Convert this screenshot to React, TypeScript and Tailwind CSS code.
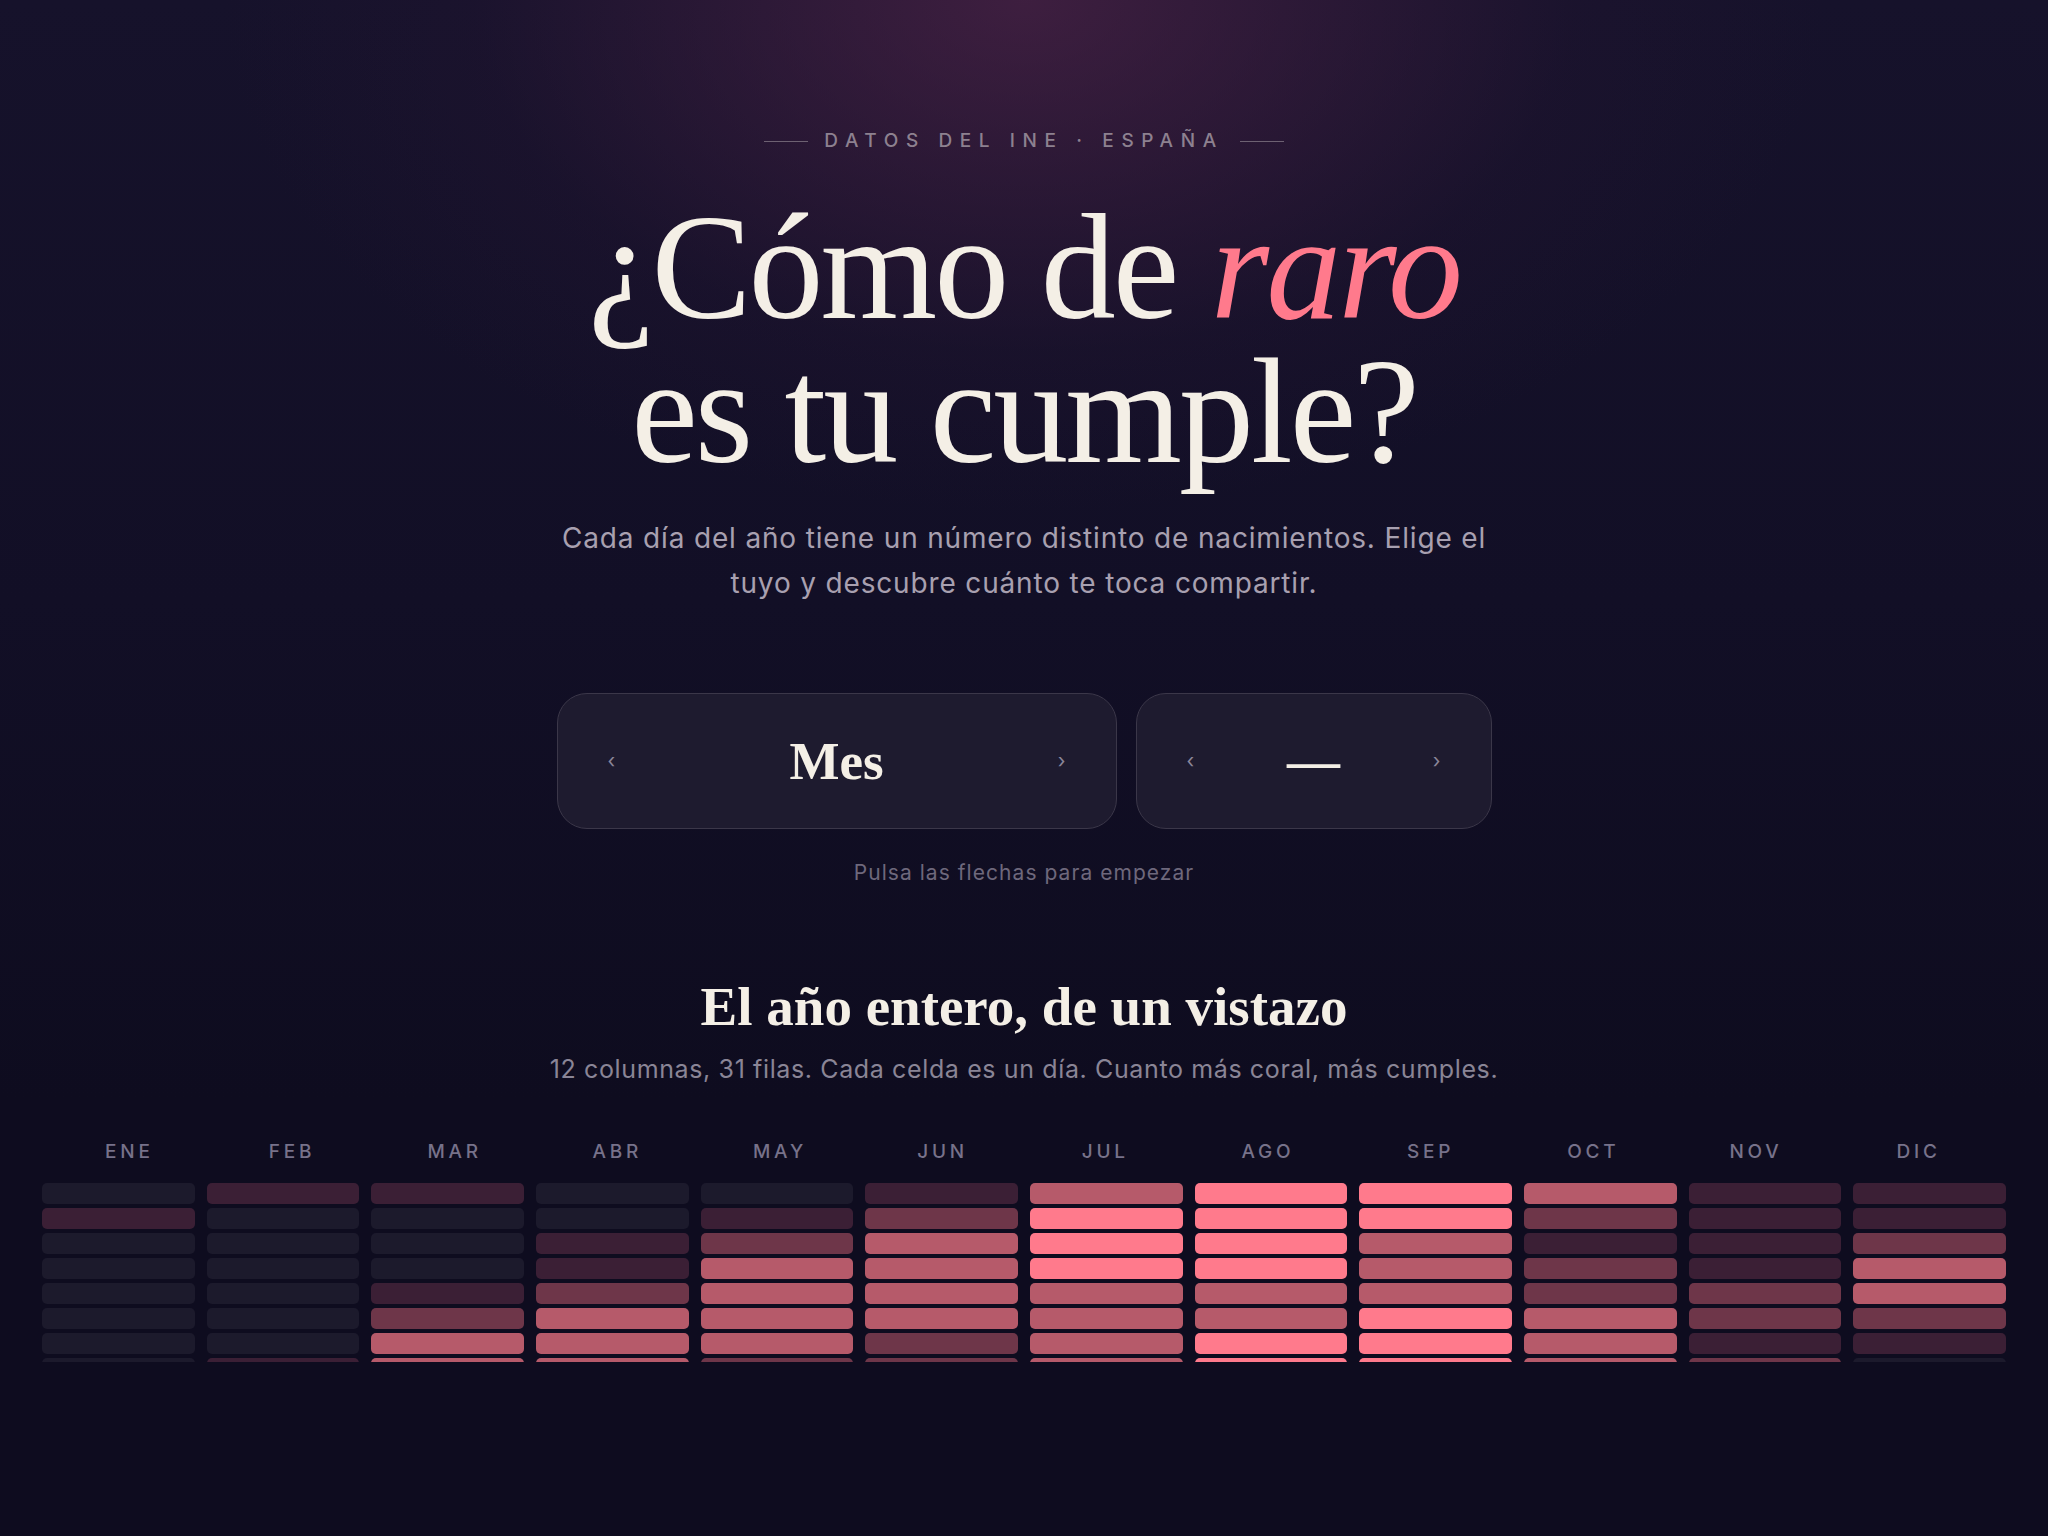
import React from "react";

// Intensity scale for the day cells, from quiet days to the busiest ones.
const LEVELS = [
  "bg-[#1c1a2c]",
  "bg-[#3b1f35]",
  "bg-[#6e3649]",
  "bg-[#b65a6a]",
  "bg-[#ff7a8c]",
];

type Month = { name: string; days: number; pattern: string };

const MONTHS: Month[] = [
  { name: "ENE", days: 31, pattern: "01000000" },
  { name: "FEB", days: 29, pattern: "10000001" },
  { name: "MAR", days: 31, pattern: "10001233" },
  { name: "ABR", days: 30, pattern: "00112333" },
  { name: "MAY", days: 31, pattern: "01233332" },
  { name: "JUN", days: 30, pattern: "12333322" },
  { name: "JUL", days: 31, pattern: "34443333" },
  { name: "AGO", days: 31, pattern: "44443344" },
  { name: "SEP", days: 30, pattern: "44333444" },
  { name: "OCT", days: 31, pattern: "32122333" },
  { name: "NOV", days: 30, pattern: "11112212" },
  { name: "DIC", days: 31, pattern: "11233210" },
];

function levelFor(m: Month, day: number): number {
  return Number(m.pattern[day % m.pattern.length]);
}

const serif = "font-['Liberation_Serif',serif]";
const sans = "font-['Inter','Noto_Sans',sans-serif]";

function Picker({ children, wide }: { children: React.ReactNode; wide?: boolean }) {
  return (
    <div
      className={`flex h-[136px] items-center justify-between rounded-[30px] border border-[#3b3749] bg-[#1e1b2f] px-[50px] ${
        wide ? "w-[560px]" : "w-[356px]"
      }`}
    >
      <button className={`${sans} text-[20px] leading-none text-[#8a8699]`}>‹</button>
      {children}
      <button className={`${sans} text-[20px] leading-none text-[#8a8699]`}>›</button>
    </div>
  );
}

export default function App() {
  const rows = Array.from({ length: 31 }, (_, i) => i);
  return (
    <div
      className={`min-h-screen w-full bg-[radial-gradient(ellipse_1000px_640px_at_50%_0%,rgba(86,38,76,0.62),rgba(40,22,52,0.25)_55%,transparent_80%),linear-gradient(180deg,#16122b_0%,#120f26_600px,#0e0c1f_1100px)] pt-[129px] ${sans}`}
    >
      <div className="flex flex-col items-center">
        {/* eyebrow */}
        <div className="flex h-[24px] items-center gap-4">
          <span className="h-px w-[44px] bg-[#6d6172]" />
          <span className="text-[19px] font-medium leading-[24px] tracking-[0.4em] text-[#8d8190]">
            DATOS DEL INE · ESPAÑA
          </span>
          <span className="h-px w-[44px] bg-[#6d6172]" />
        </div>

        {/* headline */}
        <h1
          className={`${serif} mt-[42px] flex flex-col items-center text-center text-[150px] font-normal leading-[144px] tracking-[-0.02em] text-[#f4efe6]`}
        >
          <span className="block">
            ¿Cómo de <em className="italic text-[#ff7a8c]">raro</em>
          </span>
          <span className="block">es tu cumple?</span>
        </h1>

        <p className="mt-[33px] max-w-[950px] text-center text-[28px] leading-[45px] tracking-[0.03em] text-[#a8a0b0]">
          Cada día del año tiene un número distinto de nacimientos. Elige el tuyo y descubre cuánto te
          toca compartir.
        </p>

        {/* month / day pickers */}
        <div className="mt-[87px] flex gap-[19px]">
          <Picker wide>
            <span className={`${serif} text-[53px] font-bold leading-none text-[#f4efe6]`}>Mes</span>
          </Picker>
          <Picker>
            <span className={`${serif} text-[53px] font-bold leading-none text-[#f4efe6]`}>—</span>
          </Picker>
        </div>

        <p className="mt-[30px] text-[21px] leading-[28px] tracking-[0.05em] text-[#6e687c]">
          Pulsa las flechas para empezar
        </p>

        {/* year overview */}
        <h2 className={`${serif} mt-[90px] text-[55px] font-bold leading-[60px] text-[#f4efe6]`}>
          El año entero, de un vistazo
        </h2>
        <p className="mt-[16px] text-[25px] leading-[32px] tracking-[0.025em] text-[#8a8596]">
          12 columnas, 31 filas. Cada celda es un día. Cuanto más coral, más cumples.
        </p>
      </div>

      <div className="mt-[55px] px-[42px]">
        <div className="grid grid-cols-12 gap-x-3 px-3">
          {MONTHS.map((m) => (
            <div
              key={m.name}
              className="text-center text-[19px] font-medium leading-[24px] tracking-[0.2em] text-[#77728a]"
            >
              {m.name}
            </div>
          ))}
        </div>

        <div className="mt-[19px] h-[179px] overflow-hidden">
          <div className="grid grid-cols-12 gap-x-3 gap-y-1">
            {rows.map((r) =>
              MONTHS.map((m) => (
                <div
                  key={`${m.name}-${r}`}
                  className={`h-[21px] rounded-[5px] ${
                    r < m.days ? LEVELS[levelFor(m, r)] : "bg-transparent"
                  }`}
                />
              ))
            )}
          </div>
        </div>
      </div>
    </div>
  );
}
